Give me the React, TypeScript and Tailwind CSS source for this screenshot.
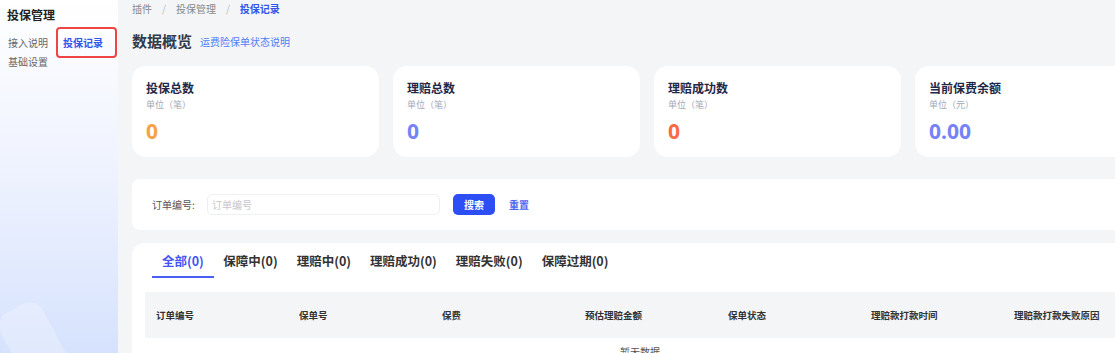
const font = { fontFamily: '"Noto Sans CJK SC", "Noto Sans", sans-serif' };

const stats = [
  { title: "投保总数", unit: "单位（笔）", value: "0", color: "text-[#f7a245]" },
  { title: "理赔总数", unit: "单位（笔）", value: "0", color: "text-[#7683f5]" },
  { title: "理赔成功数", unit: "单位（笔）", value: "0", color: "text-[#fa6a45]" },
  { title: "当前保费余额", unit: "单位（元）", value: "0.00", color: "text-[#7683f5]" },
];

const tabs = ["全部(0)", "保障中(0)", "理赔中(0)", "理赔成功(0)", "理赔失败(0)", "保障过期(0)"];

const columns = ["订单编号", "保单号", "保费", "预估理赔金额", "保单状态", "理赔款打款时间", "理赔款打款失败原因"];

function Sidebar() {
  return (
    <aside className="relative w-[118px] shrink-0 overflow-hidden bg-gradient-to-b from-white via-[#eef2fe] to-[#d6e2fd]">
      <div className="px-[7px] pt-[6px] text-[12px] font-bold leading-[18px] text-[#222]">投保管理</div>
      <div className="mt-[3px] flex flex-wrap text-[10px] leading-[16px] text-[#666]">
        <div className="flex h-[31px] w-[56px] items-center pl-[8px]">接入说明</div>
        <div className="flex h-[31px] w-[61px] items-center rounded-[4px] border-2 border-[#ee4444] pl-[5px] font-semibold text-[#3355ee]">
          投保记录
        </div>
        <div className="-mt-[2px] flex h-[12px] w-[56px] items-center pl-[8px]">基础设置</div>
      </div>
      <div className="absolute bottom-[-40px] left-[12px] h-[90px] w-[48px] rotate-[-28deg] rounded-[16px] bg-white/25" />
    </aside>
  );
}

function StatCard({ title, unit, value, color }: (typeof stats)[number]) {
  return (
    <div className="h-[91px] w-[247px] shrink-0 rounded-[14px] bg-white px-[14px] pt-[14px]">
      <div className="text-[12px] font-bold leading-[16px] text-[#1f2847]">{title}</div>
      <div className="mt-[3px] text-[9px] leading-[12px] text-[#a3a8b8]">{unit}</div>
      <div className={`mt-[7px] text-[21px] font-bold leading-[26px] ${color}`} style={{ fontFamily: '"Noto Sans", sans-serif' }}>
        {value}
      </div>
    </div>
  );
}

export default function App() {
  return (
    <div className="flex h-[353px] w-[1115px] overflow-hidden bg-[#f4f5f7]" style={font}>
      <Sidebar />
      <main className="w-[1030px] shrink-0 pl-[14px]">
        <div className="flex h-[16px] items-center gap-[10px] text-[10px] text-[#888]">
          <span>插件</span>
          <span className="text-[#bbb]">/</span>
          <span>投保管理</span>
          <span className="text-[#bbb]">/</span>
          <span className="font-semibold text-[#3355ee]">投保记录</span>
        </div>

        <div className="mt-[15px] flex items-center gap-[8px]">
          <h1 className="text-[15px] font-bold leading-[20px] text-[#333a48]">数据概览</h1>
          <a className="text-[10px] text-[#4f7ef6]">运费险保单状态说明</a>
        </div>

        <div className="mt-[15px] flex gap-[14px]">
          {stats.map((s) => (
            <StatCard key={s.title} {...s} />
          ))}
        </div>

        <div className="mt-[22px] flex h-[51px] items-center rounded-[8px] bg-white pl-[20px]">
          <span className="w-[55px] text-[10px] text-[#555]">订单编号:</span>
          <div className="flex h-[21px] w-[233px] items-center rounded-[5px] border border-[#eef0f3] px-[4px] text-[10px] text-[#c4c7cd]">
            订单编号
          </div>
          <button className="ml-[13px] h-[21px] w-[42px] rounded-[5px] bg-[#2d4ef5] text-[10px] font-semibold text-white">
            搜索
          </button>
          <button className="ml-[14px] text-[10px] font-semibold text-[#4a66ee]">重置</button>
        </div>

        <div className="mt-[13px] rounded-tl-[12px] bg-white">
          <div className="flex h-[35px] pl-[20px] pt-[4px]">
            {tabs.map((t, i) => (
              <div
                key={t}
                className={`flex items-center text-[12.5px] font-semibold ${
                  i === 0
                    ? "border-b-2 border-[#4a5ff5] px-[10px] text-[#4156f5]"
                    : "border-b-2 border-transparent px-[9.5px] text-[#333]"
                }`}
              >
                {t}
              </div>
            ))}
          </div>
          <div className="px-[13px] pt-[14px]">
            <div className="flex h-[46px] items-center bg-[#f4f5f7]">
              {columns.map((c) => (
                <div key={c} className="w-[143px] shrink-0 pl-[11px] text-[9.5px] font-semibold text-[#333]">
                  {c}
                </div>
              ))}
            </div>
            <div className="pt-[6px] text-center text-[10px] text-[#555]">暂无数据</div>
          </div>
        </div>
      </main>
    </div>
  );
}
